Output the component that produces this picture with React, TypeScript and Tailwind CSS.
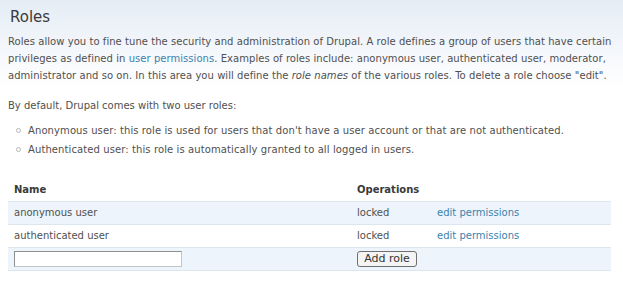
export default function App() {
  const rows = [
    { name: 'anonymous user', status: 'locked' },
    { name: 'authenticated user', status: 'locked' },
  ];

  return (
    <div className="w-[623px] h-[291px] overflow-hidden bg-gradient-to-b from-[#e4ecf5] via-[#f7f9fc] via-[20%] to-white to-[30%] text-[#505050] text-[10px] font-['DejaVu_Sans',sans-serif]">
      <h2 className="pl-[10px] pt-[7px] text-[15px] leading-[20px] text-[#3a3a3a]">Roles</h2>
      <p className="pl-[8px] mt-[6px] leading-[17px] whitespace-nowrap tracking-[0.05px]">
        Roles allow you to fine tune the security and administration of Drupal. A role defines a group of users that have certain
        <br />
        privileges as defined in <a className="text-[#3b82ad]">user permissions</a>. Examples of roles include: anonymous user, authenticated user, moderator,
        <br />
        administrator and so on. In this area you will define the <em>role names</em> of the various roles. To delete a role choose "edit".
      </p>
      <p className="pl-[8px] mt-[13px] leading-[17px]">By default, Drupal comes with two user roles:</p>
      <ul className="mt-[8px] pl-[16px] flex flex-col gap-[2px] tracking-[0.1px]">
        <li className="flex items-center gap-[7px] leading-[17px]">
          <span className="w-[5px] h-[5px] rounded-full border border-[#b5b5b5]" />
          Anonymous user: this role is used for users that don't have a user account or that are not authenticated.
        </li>
        <li className="flex items-center gap-[7px] leading-[17px]">
          <span className="w-[5px] h-[5px] rounded-full border border-[#b5b5b5]" />
          Authenticated user: this role is automatically granted to all logged in users.
        </li>
      </ul>
      <table className="ml-[8px] mt-[20px] w-[603px] table-fixed border-collapse">
        <colgroup>
          <col className="w-[349px]" />
          <col className="w-[80px]" />
          <col />
        </colgroup>
        <thead>
          <tr className="h-[23px]">
            <th className="pl-[6px] text-left font-bold text-[#3a3a3a]">Name</th>
            <th className="text-left font-bold text-[#3a3a3a]">Operations</th>
            <th />
          </tr>
        </thead>
        <tbody>
          {rows.map((r, i) => (
            <tr
              key={r.name}
              className={`h-[23px] border-y border-[#dbe6ef] ${i % 2 === 0 ? 'bg-[#edf4fb]' : 'bg-white'}`}
            >
              <td className="pl-[6px]">{r.name}</td>
              <td>{r.status}</td>
              <td>
                <a className="text-[#3b82ad]">edit permissions</a>
              </td>
            </tr>
          ))}
          <tr className="h-[23px] border-y border-[#dbe6ef] bg-[#edf4fb]">
            <td className="pl-[6px]">
              <input className="block w-[168px] h-[16px] bg-white border border-[#8f8f8f] border-r-[#c4c4c4] border-b-[#c4c4c4]" />
            </td>
            <td>
              <button className="block w-[60px] h-[16px] rounded-[3px] border border-[#6f6f6f] bg-[#f4f4f4] text-[11px] leading-[14px] text-[#333]">
                Add role
              </button>
            </td>
            <td />
          </tr>
        </tbody>
      </table>
    </div>
  );
}
